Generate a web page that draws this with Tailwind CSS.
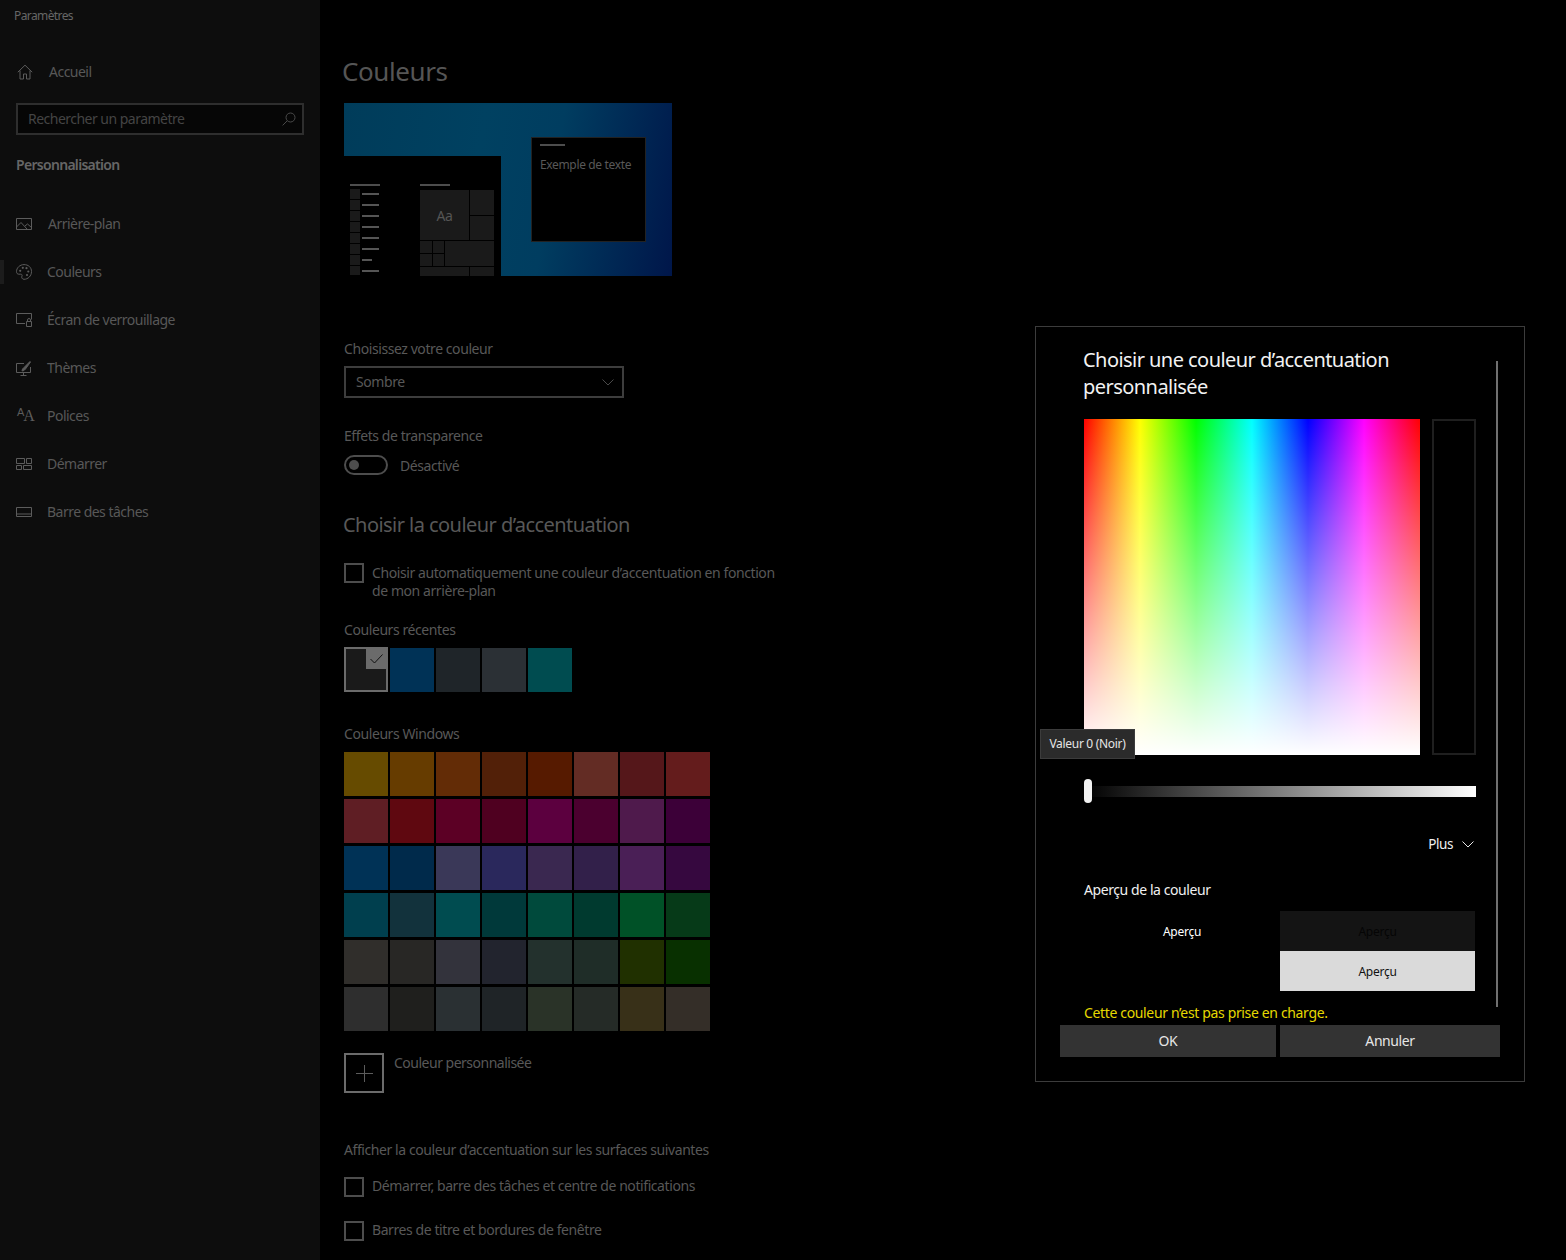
<!DOCTYPE html>
<html lang="fr">
<head>
  <meta charset="UTF-8">
  <title>Paramètres</title>
  <script src="https://cdn.jsdelivr.net/npm/@tailwindcss/browser@4"></script>
</head>
<body class="bg-black w-[1566px] h-[1260px] overflow-hidden flex font-['Noto_Sans',sans-serif] text-[14px] tracking-[-0.42px] text-[#585858]">

  <!-- Barre latérale -->
  <aside class="w-[320px] h-full shrink-0 bg-[#0d0d0d] flex flex-col relative tracking-[-0.52px]">
    <div class="h-[32px] pl-[14px] leading-[32px] text-[12px] tracking-[-0.6px] text-[#666]">Paramètres</div>

    <a class="mt-[16px] h-[48px] flex items-center pl-[17px] gap-[16px]">
      <svg class="w-[16px] h-[16px]" viewBox="0 0 16 16" fill="none" stroke="#5c5c5c"><path d="M.8 8.200 8 1.200l7.200 7M3 6.500v8.500h3.500v-5h3v5H13V6.500"/></svg>
      <span class="pb-[2px]">Accueil</span>
    </a>

    <div class="mt-[7px] mx-[16px] h-[32px] border-2 border-[#2e2e2e] bg-[#060606] flex items-center justify-between pl-[10px] pr-[6px] text-[#444]">
      <span class="pb-[2px]">Rechercher un paramètre</span>
      <svg class="w-[14px] h-[14px]" viewBox="0 0 14 14" fill="none" stroke="#4a4a4a"><circle cx="8.500" cy="5.500" r="4.500"/><path d="M5.200 8.800.6 13.400"/></svg>
    </div>

    <div class="mt-[20px] pl-[16px] h-[20px] leading-[20px] font-semibold tracking-[-0.7px] text-[#666]">Personnalisation</div>

    <nav class="mt-[25px] flex flex-col">
      <a class="h-[48px] flex items-center pl-[16px] gap-[16px]">
        <svg class="w-[16px] h-[14px]" viewBox="0 0 16 14" fill="none" stroke="#5c5c5c"><path d="M.5 1.500h15v11H.5zM.5 10 5 5.500l6 6.500M9 9l2.500-2 4 3.500"/></svg>
        <span class="pb-[2px]">Arrière-plan</span>
      </a>
      <a class="h-[48px] flex items-center pl-[16px] gap-[15px] relative">
        <span class="absolute left-0 top-[12px] w-[4px] h-[24px] bg-[#1c1c1c]"></span>
        <svg class="w-[16px] h-[16px]" viewBox="0 0 16 16" fill="none" stroke="#5c5c5c"><path d="M8 .6C3.800.6.5 3.800.5 7.600c0 1.700 1 2.600 2.300 2.600h2c1.200 0 1.600 1 1.100 2-.6 1.200.2 3.100 2.100 3.100 4 0 7.500-3.300 7.500-7.700S12.200.6 8 .6Z"/><g fill="#5c5c5c" stroke="none"><circle cx="4.200" cy="6.800" r="1.100"/><circle cx="6.800" cy="3.800" r="1.100"/><circle cx="10.500" cy="4.200" r="1.100"/><circle cx="12.300" cy="7.500" r="1.100"/><circle cx="11" cy="11" r="1.100"/></g></svg>
        <span class="pb-[2px]">Couleurs</span>
      </a>
      <a class="h-[48px] flex items-center pl-[16px] gap-[15px]">
        <svg class="w-[16px] h-[14px]" viewBox="0 0 16 14" fill="none" stroke="#5c5c5c"><path d="M9 10.500H.5V.5h15v6M10.500 8.500h5v5h-5zM11.500 8.500V7a1.500 1.500 0 0 1 3 0v1.500"/></svg>
        <span class="pb-[2px]">Écran de verrouillage</span>
      </a>
      <a class="h-[48px] flex items-center pl-[16px] gap-[16px]">
        <svg class="w-[15px] h-[15px]" viewBox="0 0 15 15" fill="none" stroke="#5c5c5c"><path d="M8 2.500H.5v9h14V6M7.500 11.500v3M4.500 14.500h6"/><path d="M14 .5 8 6.500 6.500 8l-.5 2 2-.5 1.500-1.500 5-7z" fill="#5c5c5c"/></svg>
        <span class="pb-[2px]">Thèmes</span>
      </a>
      <a class="h-[48px] flex items-center pl-[17px] gap-[16px]">
        <span class="w-[14px] h-[16px] flex items-end text-[#5c5c5c] font-['Liberation_Sans',sans-serif] leading-none tracking-[-1px]"><span class="text-[11px] mb-[6px]">A</span><span class="text-[16px] font-['Liberation_Serif',serif]">A</span></span>
        <span class="pb-[2px]">Polices</span>
      </a>
      <a class="h-[48px] flex items-center pl-[16px] gap-[15px]">
        <svg class="w-[16px] h-[12px]" viewBox="0 0 16 12" fill="none" stroke="#5c5c5c"><path d="M.5.5h8v5h-8zM10.500.5h5v5h-5zM.5 7.500h5v4h-5zM7.500 7.500h8v4h-8z"/></svg>
        <span class="pb-[2px]">Démarrer</span>
      </a>
      <a class="h-[48px] flex items-center pl-[16px] gap-[15px]">
        <svg class="w-[16px] h-[10px]" viewBox="0 0 16 10" fill="none" stroke="#5c5c5c"><path d="M.5.5h15v9H.5zM.5 7h15"/></svg>
        <span class="pb-[2px]">Barre des tâches</span>
      </a>
    </nav>
  </aside>

  <!-- Contenu -->
  <main class="flex-1 pl-[24px] flex flex-col items-start relative">
    <h1 class="mt-[51px] -ml-[2px] h-[40px] leading-[40px] text-[26px] text-[#555]">Couleurs</h1>

    <!-- Aperçu -->
    <div class="mt-[12px] w-[328px] h-[173px] relative bg-[linear-gradient(100deg,#003c5a_0%,#004161_40%,#003d60_62%,#00164a_100%)]">
      <div class="absolute left-0 bottom-0 w-[157px] h-[120px] bg-black flex pl-[6px] pt-[28px] gap-[40px]">
        <div class="w-[30px] flex flex-col">
          <div class="h-[2px] bg-[#4d4d4d] mb-[3px]"></div>
          <div class="flex flex-col gap-[1px]">
            <div class="flex items-center gap-[2px]"><span class="w-[10px] h-[10px] bg-[#1a1a1a]"></span><span class="w-[17px] h-[2px] bg-[#555]"></span></div>
            <div class="flex items-center gap-[2px]"><span class="w-[10px] h-[10px] bg-[#1a1a1a]"></span><span class="w-[17px] h-[2px] bg-[#555]"></span></div>
            <div class="flex items-center gap-[2px]"><span class="w-[10px] h-[10px] bg-[#1a1a1a]"></span><span class="w-[17px] h-[2px] bg-[#555]"></span></div>
            <div class="flex items-center gap-[2px]"><span class="w-[10px] h-[10px] bg-[#1a1a1a]"></span><span class="w-[17px] h-[2px] bg-[#555]"></span></div>
            <div class="flex items-center gap-[2px]"><span class="w-[10px] h-[10px] bg-[#1a1a1a]"></span><span class="w-[17px] h-[2px] bg-[#555]"></span></div>
            <div class="flex items-center gap-[2px]"><span class="w-[10px] h-[10px] bg-[#1a1a1a]"></span><span class="w-[17px] h-[2px] bg-[#555]"></span></div>
            <div class="flex items-center gap-[2px]"><span class="w-[10px] h-[10px] bg-[#1a1a1a]"></span><span class="w-[10px] h-[2px] bg-[#555]"></span></div>
            <div class="flex items-center gap-[2px]"><span class="w-[10px] h-[9px] bg-[#1a1a1a]"></span><span class="w-[17px] h-[2px] bg-[#555]"></span></div>
          </div>
        </div>
        <div class="w-[74px] flex flex-col">
          <div class="w-[30px] h-[2px] bg-[#4d4d4d] mb-[4px]"></div>
          <div class="grid grid-cols-[12px_11px_24px_24px] grid-rows-[25px_24px_12px_12px_9px] gap-[1px]">
            <div class="col-span-3 row-span-2 bg-[#1a1a1a] flex items-center justify-center text-[14px] text-[#555]">Aa</div>
            <div class="bg-[#1a1a1a]"></div>
            <div class="bg-[#1a1a1a]"></div>
            <div class="bg-[#1a1a1a]"></div>
            <div class="bg-[#1a1a1a]"></div>
            <div class="col-span-2 row-span-2 bg-[#1a1a1a]"></div>
            <div class="bg-[#1a1a1a]"></div>
            <div class="bg-[#1a1a1a]"></div>
            <div class="col-span-3 bg-[#1a1a1a]"></div>
            <div class="bg-[#1a1a1a]"></div>
          </div>
        </div>
      </div>
      <div class="absolute left-[187px] top-[34px] w-[115px] h-[105px] bg-black border border-[#222] pl-[8px] pt-[6px]">
        <div class="w-[25px] h-[2px] bg-[#4d4d4d]"></div>
        <div class="mt-[10px] text-[12px] leading-[18px] tracking-[-0.35px]">Exemple de texte</div>
      </div>
    </div>

    <div class="mt-[63px] h-[20px] leading-[20px]">Choisissez votre couleur</div>
    <div class="mt-[7px] w-[280px] h-[32px] border-2 border-[#3d3d3d] flex items-center justify-between pl-[10px] pr-[9px]">
      <span class="pb-[2px]">Sombre</span>
      <svg class="w-[12px] h-[7px] mr-[-1px]" viewBox="0 0 12 7" fill="none" stroke="#4a4a4a"><path d="m.5.5 5.500 5.500L11.500.5"/></svg>
    </div>

    <div class="mt-[28px] h-[20px] leading-[20px]">Effets de transparence</div>
    <div class="mt-[9px] h-[20px] flex items-center gap-[12px]">
      <div class="w-[44px] h-[20px] rounded-full border-2 border-[#4d4d4d] flex items-center pl-[3px]"><span class="w-[10px] h-[10px] rounded-full bg-[#4d4d4d]"></span></div>
      <span>Désactivé</span>
    </div>

    <h2 class="mt-[35px] -ml-px h-[30px] leading-[30px] text-[20px] tracking-[-0.55px]">Choisir la couleur d’accentuation</h2>

    <div class="mt-[23px] h-[37px] flex gap-[8px]">
      <div class="w-[20px] h-[20px] border-2 border-[#4d4d4d]"></div>
      <div class="mt-px w-[420px] leading-[18px]">Choisir automatiquement une couleur d’accentuation en fonction<br>de mon arrière-plan</div>
    </div>

    <div class="mt-[20px] h-[20px] leading-[20px]">Couleurs récentes</div>
    <div class="mt-[7px] flex items-end gap-[2px]">
      <div class="w-[44px] h-[45px] bg-[#1a1a1a] border-2 border-[#6b6b6b] relative">
        <div class="absolute right-0 top-0 w-[20px] h-[20px] bg-[#6b6b6b] flex items-center justify-center">
          <svg class="w-[13px] h-[10px]" viewBox="0 0 13 10" fill="none" stroke="#111"><path d="m.5 5 4 4 8-8.500"/></svg>
        </div>
      </div>
      <div class="w-[44px] h-[44px] bg-[#003256]"></div>
      <div class="w-[44px] h-[44px] bg-[#1f2529]"></div>
      <div class="w-[44px] h-[44px] bg-[#2b3035]"></div>
      <div class="w-[44px] h-[44px] bg-[#004c50]"></div>
    </div>

    <div class="mt-[32px] h-[20px] leading-[20px]">Couleurs Windows</div>
    <div class="mt-[8px] grid grid-cols-[repeat(8,44px)] auto-rows-[44px] gap-x-[2px] gap-y-[3px]">
      <div class="bg-[#664b00]"></div><div class="bg-[#663c00]"></div><div class="bg-[#632c06]"></div><div class="bg-[#522008]"></div><div class="bg-[#561a00]"></div><div class="bg-[#632c24]"></div><div class="bg-[#55171a]"></div><div class="bg-[#641c1c]"></div>
      <div class="bg-[#5f1e24]"></div><div class="bg-[#5f0810]"></div><div class="bg-[#5c0025]"></div><div class="bg-[#4f0020]"></div><div class="bg-[#5c003f]"></div><div class="bg-[#4b002f]"></div><div class="bg-[#4f1a4c]"></div><div class="bg-[#3c0038]"></div>
      <div class="bg-[#003256]"></div><div class="bg-[#002a4b]"></div><div class="bg-[#3a3858]"></div><div class="bg-[#2a285c]"></div><div class="bg-[#3a2850]"></div><div class="bg-[#32204a]"></div><div class="bg-[#4a1f56]"></div><div class="bg-[#36083f]"></div>
      <div class="bg-[#003f4e]"></div><div class="bg-[#12323c]"></div><div class="bg-[#004c50]"></div><div class="bg-[#00393a]"></div><div class="bg-[#004a3c]"></div><div class="bg-[#003a2f]"></div><div class="bg-[#005127]"></div><div class="bg-[#063a18]"></div>
      <div class="bg-[#302e2b]"></div><div class="bg-[#282725]"></div><div class="bg-[#33333c]"></div><div class="bg-[#22242e]"></div><div class="bg-[#23312d]"></div><div class="bg-[#1f2d28]"></div><div class="bg-[#203000]"></div><div class="bg-[#083000]"></div>
      <div class="bg-[#2e2e2e]"></div><div class="bg-[#1f1f1d]"></div><div class="bg-[#2a3033]"></div><div class="bg-[#1f2427]"></div><div class="bg-[#2a3328]"></div><div class="bg-[#252b27]"></div><div class="bg-[#383018]"></div><div class="bg-[#342e28]"></div>
    </div>

    <div class="mt-[22px] h-[40px] flex gap-[10px]">
      <div class="w-[40px] h-[40px] border-2 border-[#6b6b6b] flex items-center justify-center">
        <svg class="w-[17px] h-[17px]" viewBox="0 0 17 17" fill="none" stroke="#5c5c5c"><path d="M8.500 0v17M0 8.500h17"/></svg>
      </div>
      <span class="h-[20px] leading-[20px] tracking-[-0.5px]">Couleur personnalisée</span>
    </div>

    <div class="mt-[47px] h-[20px] leading-[20px]">Afficher la couleur d’accentuation sur les surfaces suivantes</div>
    <div class="mt-[17px] h-[20px] flex items-center gap-[8px]">
      <div class="w-[20px] h-[20px] border-2 border-[#4d4d4d]"></div>
      <span class="-mt-[3px]">Démarrer, barre des tâches et centre de notifications</span>
    </div>
    <div class="mt-[24px] h-[20px] flex items-center gap-[8px]">
      <div class="w-[20px] h-[20px] border-2 border-[#4d4d4d]"></div>
      <span class="-mt-[3px]">Barres de titre et bordures de fenêtre</span>
    </div>

    <!-- Boîte de dialogue -->
    <section class="absolute left-[715px] top-[326px] w-[490px] h-[756px] bg-black border border-[#3c3c3c] text-white">
      <div class="absolute left-[460px] top-[34px] w-[2px] h-[646px] bg-[#707070]"></div>

      <h3 class="ml-[47px] mt-[19px] text-[20px] leading-[27px] tracking-[-0.55px] w-[360px] text-[#f2f2f2]">Choisir une couleur d’accentuation personnalisée</h3>

      <div class="ml-[48px] mt-[19px] flex gap-[12px]">
        <div class="w-[336px] h-[336px] bg-[linear-gradient(to_top,#fff,rgba(255,255,255,0)),linear-gradient(to_right,#f00,#ff0,#0f0,#0ff,#00f,#f0f,#f00)]"></div>
        <div class="w-[44px] h-[336px] bg-black border-2 border-[#1f1f1f]"></div>
      </div>

      <div class="absolute left-[4px] top-[402px] w-[95px] h-[30px] bg-[#2b2b2b] border border-[#3c3c3c] flex items-center justify-center text-[12px] tracking-[-0.3px] text-[#e6e6e6]">Valeur 0 (Noir)</div>

      <div class="ml-[48px] mt-[24px] w-[392px] h-[24px] flex items-center relative">
        <div class="w-full h-[11px] bg-[linear-gradient(to_right,#000,#fff)]"></div>
        <div class="absolute left-0 top-0 w-[8px] h-[24px] rounded-full bg-[#f2f2f2]"></div>
      </div>

      <div class="mt-[31px] mr-[50px] h-[20px] flex items-center justify-end gap-[9px] text-[13.500px] text-[#f0f0f0]">
        <span>Plus</span>
        <svg class="w-[12px] h-[7px]" viewBox="0 0 12 7" fill="none" stroke="#e6e6e6"><path d="m.5.5 5.500 5.500L11.500.5"/></svg>
      </div>

      <div class="ml-[48px] mt-[26px] h-[20px] leading-[20px] text-[#f0f0f0]">Aperçu de la couleur</div>

      <div class="ml-[48px] mt-[11px] w-[391px] h-[80px] flex text-[12px] tracking-[-0.25px]">
        <div class="w-[196px] h-[40px] pt-[2px] flex items-center justify-center bg-black text-white">Aperçu</div>
        <div class="w-[195px] flex flex-col">
          <div class="h-[40px] pt-[2px] bg-[#141414] flex items-center justify-center text-[#050505]">Aperçu</div>
          <div class="h-[40px] pt-[2px] bg-[#dadada] flex items-center justify-center text-[#111]">Aperçu</div>
        </div>
      </div>

      <div class="ml-[48px] mt-[12px] h-[20px] leading-[20px] tracking-[-0.35px] text-[#e6d800]">Cette couleur n’est pas prise en charge.</div>

      <div class="ml-[24px] mt-[2px] flex gap-[4px] text-[14px] text-[#e6e6e6]">
        <button class="w-[216px] h-[32px] pb-[2px] bg-[#333]">OK</button>
        <button class="w-[220px] h-[32px] pb-[2px] bg-[#333]">Annuler</button>
      </div>
    </section>
  </main>
</body>
</html>
